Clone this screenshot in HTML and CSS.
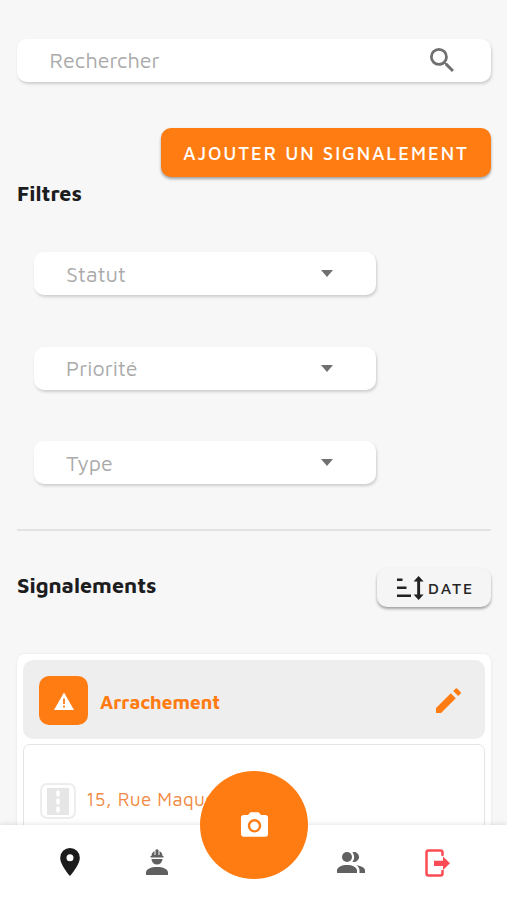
FILE: index.html
```html
<!DOCTYPE html>
<html lang="fr">
<head>
<meta charset="utf-8">
<title>Signalements</title>
<link rel="stylesheet" href="styles.css">
</head>
<body>
<main class="page">
  <div class="field search">
    <span class="placeholder">Rechercher</span>
    <svg class="search-icon" viewBox="3 3 17.5 17.5"><path d="M15.5 14h-.79l-.28-.27A6.47 6.47 0 0 0 16 9.5 6.5 6.5 0 1 0 9.5 16c1.61 0 3.09-.59 4.23-1.57l.27.28v.79l5 4.99L20.49 19l-4.99-5zm-6 0a4.5 4.5 0 1 1 0-9 4.5 4.5 0 0 1 0 9z"/></svg>
  </div>
  <button class="add">AJOUTER UN SIGNALEMENT</button>
  <h2 class="heading filters-title">Filtres</h2>
  <div class="filters">
    <div class="field select"><span class="placeholder">Statut</span><i class="caret"></i></div>
    <div class="field select"><span class="placeholder">Priorité</span><i class="caret"></i></div>
    <div class="field select"><span class="placeholder">Type</span><i class="caret"></i></div>
  </div>
  <div class="divider"></div>
  <div class="list-head">
    <h2 class="heading list-title">Signalements</h2>
    <button class="sort">
      <svg class="sort-icon" viewBox="0 0 28 26"><path d="M1 3.500h5.500v2.600H1zM1 11.500h9.500v2.600H1zM1 19.500h14v2.600H1zM21.200 5h2.900v16h-2.900z"/><path d="M22.600 1l5 5.600h-10zM22.600 25l5-5.600h-10z"/></svg>
      <span class="sort-label">DATE</span>
    </button>
  </div>
  <section class="report">
    <header class="report-head">
      <span class="badge"><svg viewBox="0 0 20 18"><path class="tri" d="M10 0.500L20 18H0z"/><path class="mark" d="M10 6.500v5.500M10 13.600v1.900"/></svg></span>
      <span class="report-title">Arrachement</span>
      <svg class="edit" viewBox="0 0 25 25"><path d="M0 20v5h5L19.800 10.200l-5-5zM17.200 2.900l5 5 2.200-2.200q1-1 0-2L21.400.7q-1-1-2 0z"/></svg>
    </header>
    <div class="report-body">
      <span class="road"><svg viewBox="0 0 22 27"><path class="asphalt" d="M0 0h22v27H0z"/><path class="dash" d="M11 4v3M11 12v3M11 20v3"/></svg></span>
      <span class="address">15, Rue Maquet</span>
    </div>
  </section>
</main>
<nav class="nav">
  <svg class="pin" viewBox="5 2 14 20"><path d="M12 2a7 7 0 0 0-7 7c0 5.250 7 13 7 13s7-7.750 7-13a7 7 0 0 0-7-7zm0 9.500a2.500 2.500 0 1 1 0-5 2.500 2.500 0 0 1 0 5z"/></svg>
  <svg class="worker" viewBox="0 0 22 26"><path d="M0 26v-2.500C0 20 5 18 11 18s11 2 11 5.500V26zM5.500 10h11a5.500 5.500 0 0 1-11 0zM4.500 8.500V7h1C5.500 5 6.500 3 8.500 2v4h1V.8Q11-.2 12.500.8V6h1V2c2 1 3 3 3 5h1v1.500z"/></svg>
  <button class="fab" aria-label="Photo"><svg viewBox="2 2 20 18"><path d="M9 2L7.170 4H4a2 2 0 0 0-2 2v12c0 1.100.9 2 2 2h16a2 2 0 0 0 2-2V6a2 2 0 0 0-2-2h-3.170L15 2zm3 15a5 5 0 1 1 0-10 5 5 0 0 1 0 10z"/><circle cx="12" cy="12" r="3.200"/></svg></button>
  <svg class="people" viewBox="0 0 28 21"><circle cx="10" cy="5" r="5"/><path d="M15.400.3a5 5 0 1 1 0 9.400 7 7 0 0 0 0-9.400zM0 21v-2.500C0 15 5 13 10 13s10 2 10 5.500V21zM19.500 13.200C24 13.800 28 15.500 28 18.500V21h-5.500v-2.500c0-2.300-1.200-4-3-5.300z"/></svg>
  <svg class="logout" viewBox="0 0 25 28"><path class="door" d="M17.500 6V3.500q0-2-2-2H3.500q-2 0-2 2v21q0 2 2 2h12q2 0 2-2V22"/><path class="arrow" d="M9 11.700h9V7.500l7 6.700-7 6.700v-4H9z"/></svg>
</nav>
</body>
</html>
```

FILE: styles.css
```css
* { box-sizing: border-box; }
body {
  margin: 0;
  height: 900px;
  overflow: hidden;
  display: flex;
  flex-direction: column;
  background: #f7f7f7;
  font-family: "Maven Pro", "Noto Sans", sans-serif;
}
svg { display: block; flex: none; }
button { border: 0; padding: 0; font-family: inherit; }
.page {
  height: 825px;
  flex: none;
  overflow: hidden;
  padding: 39px 16px 0 17px;
  display: flex;
  flex-direction: column;
}
.page > * { flex: none; }
.field {
  height: 43px;
  background: #fff;
  border-radius: 10px;
  box-shadow: 1px 2px 3px rgba(0, 0, 0, .17);
  display: flex;
  align-items: center;
  justify-content: space-between;
}
.placeholder { color: #aaa; font-size: 21.500px; line-height: 28px; font-weight: 400; white-space: nowrap; }
.search { padding: 0 37px 0 32.500px; }
.search .placeholder { margin-top: -1px; }
.search-icon { width: 24px; height: 24px; margin-top: -2px; fill: #707070; }
.add {
  align-self: flex-end;
  width: 330px;
  height: 49px;
  margin-top: 46px;
  border-radius: 10px;
  background: #ff7c12;
  color: #fff;
  font-size: 18.500px;
  font-weight: 500;
  letter-spacing: 1.930px;
  white-space: nowrap;
  box-shadow: 0 2px 3px rgba(0, 0, 0, .35);
}
.heading { margin: 0; color: #1d1d1f; font-size: 21.600px; line-height: 28px; font-weight: 700; white-space: nowrap; }
.filters-title { margin-top: 2px; }
.filters {
  margin: 45px 0 0 17px;
  width: 342px;
  display: flex;
  flex-direction: column;
  gap: 51.500px;
}
.select { padding: 0 43px 0 32px; }
.caret { border: 6.500px solid transparent; border-top: 7px solid #707070; border-bottom: 0; }
.divider { height: 2px; margin-top: 45px; background: #e3e3e3; }
.list-head { display: flex; justify-content: space-between; align-items: center; height: 39px; margin-top: 37px; }
.list-title { margin-top: -6px; }
.sort {
  width: 114px;
  height: 39px;
  border-radius: 10px;
  background: #f5f5f5;
  color: #262626;
  display: flex;
  align-items: center;
  padding-left: 19px;
  gap: 4px;
  box-shadow: 0 2px 3px rgba(0, 0, 0, .35);
}
.sort-icon { width: 28px; height: 26px; fill: #222; }
.sort-label { font-size: 15.800px; font-weight: 500; letter-spacing: 1.800px; }
.report {
  height: 220px;
  margin-top: 47px;
  padding: 6px;
  background: #fff;
  border-radius: 8px;
  box-shadow: 0 0 3px rgba(0, 0, 0, .08);
}
.report-head {
  height: 79px;
  padding: 0 24px 0 16px;
  border-radius: 10px;
  background: #eee;
  display: flex;
  align-items: center;
}
.badge { width: 49px; height: 49px; border-radius: 10px; background: #ff7c12; display: grid; place-items: center; margin-top: 2px; }
.badge svg { width: 20px; height: 18px; }
.tri { fill: #fff; }
.mark { fill: none; stroke: #ff7c12; stroke-width: 1.800; }
.report-title { margin: 5px auto 0 12px; color: #ff7c12; font-size: 19.100px; font-weight: 700; }
.edit { width: 25px; height: 25px; fill: #ff7c12; margin-top: 2px; }
.report-body {
  height: 140px;
  margin-top: 5px;
  border: 1px solid #e4e4e4;
  border-radius: 7px;
  display: flex;
  align-items: flex-start;
  padding: 38px 16px 0;
}
.road { width: 36px; height: 36px; border: 2px solid #ededed; border-radius: 7px; display: grid; place-items: center; }
.road svg { width: 22px; height: 27px; }
.asphalt { fill: #e7e6e7; }
.dash { fill: none; stroke: #fff; stroke-width: 3.500; stroke-linecap: round; }
.address { margin: 2px 0 0 10px; color: #f18a43; font-size: 18.800px; letter-spacing: .3px; line-height: 28px; white-space: nowrap; }
.nav {
  height: 75px;
  flex: none;
  position: relative;
  background: #fff;
  box-shadow: 0 -1px 5px rgba(0, 0, 0, .1);
  display: flex;
  align-items: center;
  padding: 0 57px 0 60px;
}
.pin { width: 20px; height: 28px; margin-top: -1px; fill: #1c1c1c; }
.worker { width: 22px; height: 26px; margin: -1px 0 0 66px; fill: #606060; }
.fab {
  width: 108px;
  height: 108px;
  margin: -75px 0 0 32px;
  flex: none;
  border-radius: 50%;
  background: #ff7c12;
  display: grid;
  place-items: center;
}
.fab svg { width: 27px; height: 25px; margin-top: -2px; fill: #fff; }
.people { width: 28px; height: 21px; margin: -1px 0 0 29px; fill: #606060; }
.logout { width: 25px; height: 28px; margin-left: auto; }
.door { fill: none; stroke: #fb4c55; stroke-width: 2.500; stroke-linecap: round; }
.arrow { fill: #fb4c55; }
```
